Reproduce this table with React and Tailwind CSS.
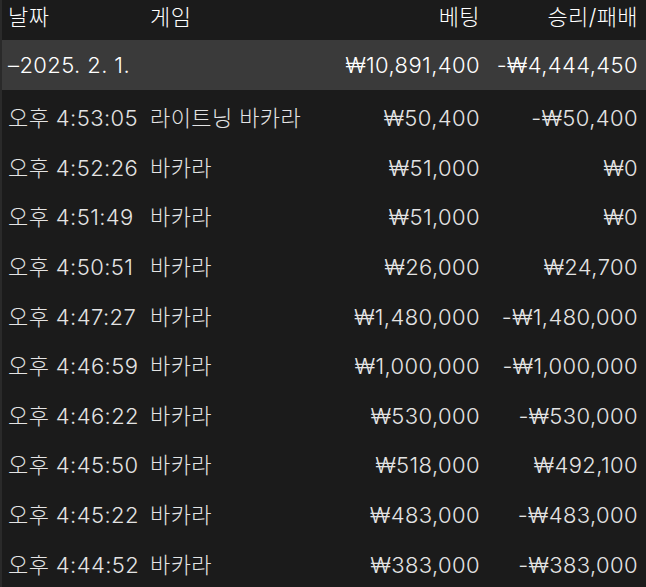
export default function App() {
  const rows = [
    ["오후 4:53:05", "라이트닝 바카라", "₩50,400", "-₩50,400"],
    ["오후 4:52:26", "바카라", "₩51,000", "₩0"],
    ["오후 4:51:49", "바카라", "₩51,000", "₩0"],
    ["오후 4:50:51", "바카라", "₩26,000", "₩24,700"],
    ["오후 4:47:27", "바카라", "₩1,480,000", "-₩1,480,000"],
    ["오후 4:46:59", "바카라", "₩1,000,000", "-₩1,000,000"],
    ["오후 4:46:22", "바카라", "₩530,000", "-₩530,000"],
    ["오후 4:45:50", "바카라", "₩518,000", "₩492,100"],
    ["오후 4:45:22", "바카라", "₩483,000", "-₩483,000"],
    ["오후 4:44:52", "바카라", "₩383,000", "-₩383,000"],
  ];
  const font = { fontFamily: '"Inter", "Noto Sans CJK KR", sans-serif' };
  return (
    <div className="w-[646px] h-[587px] overflow-hidden bg-[#1b1b1b] text-[#e4e4e4] text-[22px] font-light tracking-[0.4px] border-l-2 border-[#2a2a2a]" style={font}>
      <div className="h-[40px] flex items-center pb-[6px] text-white">
        <div className="w-[148px] pl-[6px]">날짜</div>
        <div className="flex-1">게임</div>
        <div className="w-[160px] text-right">베팅</div>
        <div className="w-[166px] text-right pr-[8px]">승리/패배</div>
      </div>
      <div className="h-[50px] flex items-center bg-[#3a3a3a] text-white">
        <div className="flex-1 pl-[6px]">–2025. 2. 1.</div>
        <div className="w-[160px] text-right">₩10,891,400</div>
        <div className="w-[166px] text-right pr-[8px]">-₩4,444,450</div>
      </div>
      {rows.map((r, i) => (
        <div key={i} className="h-[49.6px] flex items-center pt-[8px]">
          <div className="w-[148px] pl-[6px] whitespace-nowrap">{r[0]}</div>
          <div className="flex-1 whitespace-nowrap">{r[1]}</div>
          <div className="w-[160px] text-right whitespace-nowrap">{r[2]}</div>
          <div className="w-[166px] text-right pr-[8px] whitespace-nowrap">{r[3]}</div>
        </div>
      ))}
    </div>
  );
}
